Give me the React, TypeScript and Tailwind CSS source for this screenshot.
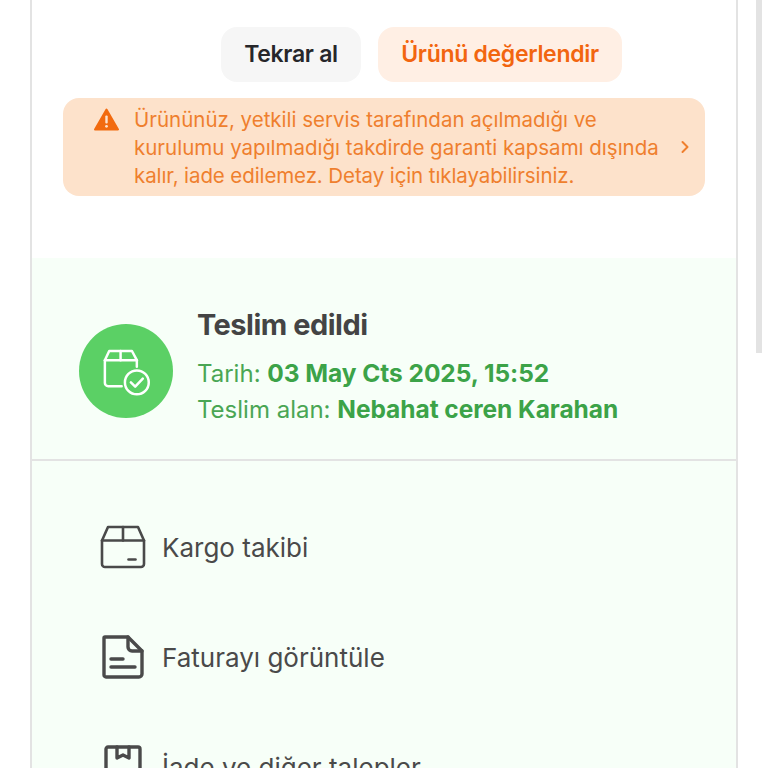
import { ChevronRight } from "lucide-react";

const BoxCheckIcon = () => (
  <svg width="52" height="52" viewBox="0 0 48 48" fill="none" stroke="#fff" strokeWidth="2.3" strokeLinecap="round" strokeLinejoin="round">
    <path d="M20 38H7.500a3 3 0 0 1-3-3V14l4-8.500h21l4.500 8.500v6" />
    <path d="M4.500 14H34" />
    <path d="M19 5.500V14" />
    <circle cx="34" cy="34.500" r="11" />
    <path d="M28.500 34.500l4 4 7-7.500" />
  </svg>
);

const BoxIcon = () => (
  <svg width="46" height="44" viewBox="0 0 46 44" fill="none" stroke="#4a4a4a" strokeWidth="2.6" strokeLinecap="round" strokeLinejoin="round">
    <path d="M2 15.500 8 2h30l6 13.500V39a3 3 0 0 1-3 3H5a3 3 0 0 1-3-3Z" />
    <path d="M2 15.500h42" />
    <path d="M23 2v13.500" />
    <path d="M28.500 34.500h7" />
  </svg>
);

const DocIcon = () => (
  <svg width="44" height="44" viewBox="0 0 44 44" fill="none" stroke="#4a4a4a" strokeWidth="3.4" strokeLinecap="round" strokeLinejoin="round">
    <path d="M4 2h23l14 14v23a3 3 0 0 1-3 3H5a2 2 0 0 1-2-2V3a1 1 0 0 1 1-1Z" />
    <path d="M27 2v10a4 4 0 0 0 4 4h10" />
    <path d="M10 24h12" />
    <path d="M10 32h24" />
  </svg>
);

const ReturnIcon = () => (
  <svg width="38" height="44" viewBox="0 0 38 44" fill="none" stroke="#4a4a4a" strokeWidth="3.4" strokeLinecap="round" strokeLinejoin="round">
    <path d="M2 42V4a2 2 0 0 1 2-2h30a2 2 0 0 1 2 2v38" />
    <path d="M13 2v11l6-3 6 3V2" />
  </svg>
);

const WarnIcon = () => (
  <svg width="25" height="23" viewBox="0 0 25 23">
    <path d="M12.500 1.500 24 21.500H1Z" fill="#f26a0f" stroke="#f26a0f" strokeWidth="2" strokeLinejoin="round" />
    <rect x="11.300" y="7.500" width="2.400" height="8" rx="1" fill="#fde3cf" />
    <circle cx="12.500" cy="18.300" r="1.400" fill="#fde3cf" />
  </svg>
);

const links = [
  { label: "Kargo takibi", icon: <BoxIcon /> },
  { label: "Faturayı görüntüle", icon: <DocIcon /> },
  { label: "İade ve diğer talepler", icon: <ReturnIcon /> },
];

export default function App() {
  return (
    <div className="relative h-[768px] w-[768px] overflow-hidden bg-white font-['Inter',sans-serif]">
      <div className="ml-[30px] h-[900px] w-[708px] border-x-2 border-[#e3e3e3]">
        <div className="flex justify-end gap-[17px] pt-[27px] pr-[114px]">
          <button className="h-[55px] w-[140px] rounded-2xl bg-[#f6f6f6] text-[23px] font-semibold tracking-[-0.3px] text-[#26262a]">
            Tekrar al
          </button>
          <button className="h-[55px] w-[244px] rounded-2xl bg-[#ffefe4] text-[23px] font-semibold tracking-[-0.3px] text-[#f2650f]">
            Ürünü değerlendir
          </button>
        </div>

        <div className="mt-[16px] ml-[31px] flex h-[98px] w-[642px] items-center rounded-2xl bg-[#fde2cb] pr-[10px] pl-[31px] text-[#ef7f2e]">
          <div className="mb-[56px] shrink-0">
            <WarnIcon />
          </div>
          <p className="mt-[2px] ml-[15px] flex-1 text-[20.500px] leading-[28px]">
            Ürününüz, yetkili servis tarafından açılmadığı ve
            <br />
            kurulumu yapılmadığı takdirde garanti kapsamı dışında
            <br />
            <span className="tracking-[-0.1px]">kalır, iade edilemez. Detay için tıklayabilirsiniz.</span>
          </p>
          <ChevronRight size={20} strokeWidth={2.4} />
        </div>

        <div className="mt-[62px] bg-[#f7fff8]">
          <div className="flex h-[203px] items-center border-b-2 border-[#e3e3e3] pt-[25px] pl-[47px]">
            <div className="flex h-[94px] w-[94px] shrink-0 items-center justify-center rounded-full bg-[#5bd065]">
              <BoxCheckIcon />
            </div>
            <div className="mb-[8px] ml-[24px]">
              <div className="text-[29px] leading-[34px] font-bold tracking-[-0.5px] text-[#444444]">Teslim edildi</div>
              <div className="mt-[13px] text-[24px] leading-[36px] text-[#4aa654]">
                Tarih: <span className="text-[24.500px] font-bold tracking-[-0.05px] text-[#3ca348]">03 May Cts 2025, 15:52</span>
              </div>
              <div className="text-[24px] leading-[35px] text-[#4aa654]">
                Teslim alan: <span className="text-[24.500px] font-bold tracking-[-0.05px] text-[#3ca348]">Nebahat ceren Karahan</span>
              </div>
            </div>
          </div>

          <div className="flex flex-col gap-[66px] pt-[64px] pl-[68px]">
            {links.map((link) => (
              <div key={link.label} className="flex h-[44px] items-center">
                <div className="flex w-[46px] justify-center">{link.icon}</div>
                <span className="ml-[16px] text-[26px] text-[#4a4a4a]">{link.label}</span>
              </div>
            ))}
          </div>
        </div>
      </div>

      <div className="absolute top-0 left-[756px] h-[353px] w-[6px] bg-[#e3e3e3]" />
    </div>
  );
}
